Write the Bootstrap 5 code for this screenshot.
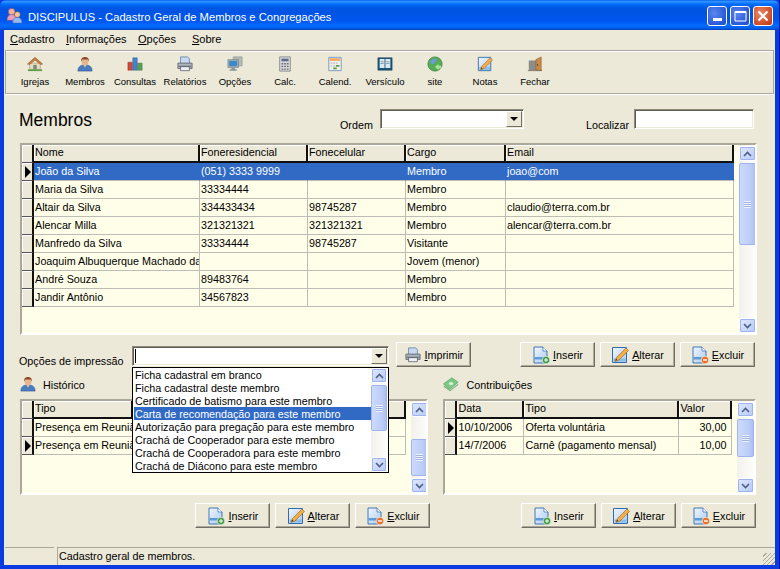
<!DOCTYPE html>
<html lang="pt">
  <head>
    <meta charset="UTF-8" />
    <title>DISCIPULUS - Cadastro Geral de Membros e Congregações</title>
    <link rel="stylesheet" type="text/css" href="https://cdn.jsdelivr.net/npm/bootstrap@5.3.3/dist/css/bootstrap.min.css" />
    <script src="https://cdn.jsdelivr.net/npm/bootstrap@5.3.3/dist/js/bootstrap.bundle.min.js"></script>
    <style>
      html, body { margin: 0; background: #0831d9; overflow: hidden; }
      body { font-family: "Liberation Sans", Arial, sans-serif; font-size: 10.75px; line-height: 13px; color: #000; }
      .xp-win { width: 780px; height: 569px; padding: 0 4px 4px; background: #0a3be0; border-right: 1px solid #0018a8; }
      .xp-title { height: 30px; margin: 0 -4px; padding: 0 6px; gap: 5px; border-radius: 6px 6px 0 0; color: #fff; font-size: 11.2px;
        background: linear-gradient(to bottom, #0058ee 0%, #3593ff 4%, #288eff 7%, #127dff 10%, #036ffc 14%, #0262ee 20%, #0057e5 26%, #0054e3 40%, #0055eb 62%, #005bf5 74%, #026afe 84%, #0062ef 92%, #0052d6 97%, #0040ab 100%); }
      .xp-title-txt { padding-top: 4px; }
      .xp-ctls { gap: 3px; padding-top: 2px; }
      .xp-ctl { width: 20px; height: 20px; border: 1px solid #fff; border-radius: 3px; background: radial-gradient(circle at 35% 35%, #5a86ee, #2453d4 80%); }
      .xp-ctl.xp-close { background: radial-gradient(circle at 35% 35%, #e88a6c, #c9411c 80%); }
      .xp-body { height: 535px; background: #ece9d8; }
      .xp-menu { height: 20px; padding-left: 6px; padding-bottom: 2px; font-size: 11px; }
      .xp-m1 { width: 56px; } .xp-m2 { width: 72px; } .xp-m3 { width: 54px; }
      .xp-tools { height: 44px; margin: 0 1px; padding-left: 4px; border: 1px solid #aca899; box-shadow: inset 0 1px 0 #fff, 0 1px 0 #fff; font-size: 9.5px; }
      .xp-tool { width: 50px; padding-top: 5px; text-align: center; }
      .xp-tool svg { display: block; margin: 0 auto 3px; }
      .xp-head { height: 49px; padding-left: 15px; }
      .xp-h { width: 321px; margin: 0; padding-top: 2px; font-size: 17.5px; line-height: 20px; font-weight: 400; }
      .xp-l-ordem { width: 40px; padding-top: 14px; }
      .xp-l-local { width: 48px; margin-left: 62px; padding-top: 13px; }
      .xp-ordem { width: 144px; height: 20px; }
      .xp-local { width: 120px; height: 20px; }
      .xp-sunk { background: #fff; border: 1px solid; border-color: #8d8a7c #fff #fff #8d8a7c; box-shadow: inset 1px 1px 0 #5f5d52, inset -1px -1px 0 #ece9d8; }
      .xp-caret { width: 1px; height: 14px; margin: 2px 0 0 2px; background: #000; }
      .xp-drop { width: 16px; height: 16px; margin: 1px; background: #ece9d8; border: 1px solid; border-color: #fff #716f64 #716f64 #fff; }
      .xp-drop i { border: 4px solid transparent; border-top: 4px solid #000; border-bottom: 0; }
      .xp-grid { border: 2px solid; border-color: #aca899 #fff #fff #aca899; background: #fffee8; overflow: hidden; }
      .xp-grid-main { width: 737px; height: 192px; margin-left: 16px; }
      .xp-table { table-layout: fixed; border-collapse: separate; border-spacing: 0; margin: 0; height: fit-content; flex: none; }
      .xp-table th, .xp-table td { height: 18px; padding: 0 1px 1px; overflow: hidden; white-space: nowrap; font-weight: 400; background: #fffee8; border-right: 1px solid #bdbdb5; border-bottom: 1px solid #bdbdb5; }
      .xp-table th { background: #ece9d8; border-right: 2px solid #111; border-bottom: 2px solid #111; box-shadow: inset 1px 1px 0 #fff; }
      .xp-table .xp-ind { padding: 0; background: #ece9d8; border-right: 2px solid #111; border-bottom: 1px solid #555; box-shadow: inset 1px 1px 0 #fff; }
      .xp-table tr.xp-sel td:not(.xp-ind) { background: #316ac5; color: #fff; border-right-color: #316ac5; }
      .xp-table .xp-num { text-align: right; padding-right: 5px; }
      .xp-arrow { display: block; margin-left: 3px; width: 0; height: 0; border: 6px solid transparent; border-left: 6px solid #000; border-right: 0; }
      .w-main { width: 712px; } .w-hist { width: 384px; } .w-contrib { width: 287px; }
      .c12 { width: 12px; } .c53 { width: 53px; } .c67 { width: 67px; } .c98 { width: 98px; } .c99 { width: 99px; } .c100 { width: 100px; } .c108 { width: 108px; } .c155 { width: 155px; } .c166 { width: 166px; } .c228 { width: 228px; } .c273 { width: 273px; }
      .xp-sb { width: 17px; margin-left: 5px; padding-top: 1px; flex: none; background: linear-gradient(to right, #f3f1ec, #fdfdfa); }
      .xp-sb-r { margin-left: auto; }
      .xp-sb-list { width: 16px; margin-left: 0; padding-top: 0; }
      .xp-sb-btn { height: 15px; flex: none; border: 1px solid #fff; border-radius: 2px; background: linear-gradient(135deg, #dfe8fe, #b7c9f6); box-shadow: 0 0 0 1px #9db4ec inset; }
      .xp-sb-thumb { flex: none; margin: 2px 0; border: 1px solid #9db4ec; border-radius: 2px; background: linear-gradient(to right, #cddafc, #bccdf9 70%, #aebff0); }
      .xp-sb-thumb i { width: 7px; height: 7px; background: repeating-linear-gradient(to bottom, #eef3ff 0 1px, #9eb3e8 1px 2px); }
      .t82 { height: 82px; } .t46 { height: 46px; } .t37 { height: 37px; } .t38 { height: 38px; }
      .xp-opts { height: 25px; margin-top: 7px; padding-left: 15px; padding-right: 20px; }
      .xp-l-opts { width: 113px; padding-top: 13px; }
      .xp-combo-wrap { width: 257px; height: 20px; margin-top: 4px; position: relative; }
      .xp-list { position: absolute; top: 21px; left: 0; width: 257px; height: 106px; padding: 0 1px; background: #fff; border: 1px solid #000; z-index: 5; }
      .xp-list-items div { height: 13px; padding-left: 1px; line-height: 13px; white-space: nowrap; }
      .xp-list-items div:first-child { margin-top: 0; }
      .xp-list-items .xp-hl { background: #316ac5; color: #fff; }
      .xp-list-items span { position: relative; top: 1px; }
      .xp-btn { width: 75px; height: 25px; padding: 0; gap: 3px; font-size: 10.75px; line-height: 13px; border-radius: 0; background: #ece9d8; color: #000; border: 1px solid; border-color: #fff #716f64 #716f64 #fff; box-shadow: inset -1px -1px 0 #aca899; }
      .xp-btn span { padding-top: 2px; }
      .xp-btn-print { margin-left: 7px; }
      .xp-btns { gap: 5px; }
      .xp-lower { margin-top: 9px; padding-left: 16px; padding-right: 19px; }
      .xp-lbl { height: 16px; gap: 7px; margin-bottom: 7px; }
      .xp-lbl span { padding-top: 2px; }
      .xp-col-l { width: 411px; }
      .xp-col-r { width: 313px; margin-left: 13px; }
      .xp-grid-sub { height: 96px; }
      .xp-grid-hist { width: 408px; }
      .xp-status { height: 18px; margin-top: auto; }
      .xp-panel { border-top: 1px solid #aca899; }
      .xp-p1 { width: 49px; margin-left: 1px; }
      .xp-p2 { margin-left: 3px; padding-left: 1px; border-left: 1px solid #aca899; }
      .xp-grip { background: repeating-linear-gradient(135deg, transparent 0 2px, #aca899 2px 3px); width: 12px; height: 12px; }
    </style>
  </head>
  <body>
    <svg width="0" height="0" class="d-block">
      <defs>
        <linearGradient id="doc-fill" x1="0" y1="0" x2="1" y2="1"><stop offset="0" stop-color="#f2f7fe"/><stop offset="1" stop-color="#a9c9ef"/></linearGradient>
        <symbol id="ic-app" viewBox="0 0 18 18">
          <circle cx="6" cy="5" r="3.500" fill="#eeb0a8" stroke="#a05040" stroke-width=".6"/>
          <path d="M1 14c0-4 2-6 5-6s5 2 5 6z" fill="#e8a0c0" stroke="#a05078" stroke-width=".6"/>
          <circle cx="12" cy="8" r="3" fill="#f0c8a0" stroke="#906030" stroke-width=".6"/>
          <path d="M7 17c0-4 2-6 5-6s5 2 5 6z" fill="#98b8f0" stroke="#4868b0" stroke-width=".6"/>
        </symbol>
        <symbol id="ic-house" viewBox="0 0 18 18">
          <path d="M3 8h12v7H3z" fill="#e9dcc0" stroke="#a08a60" stroke-width=".6"/>
          <path d="M0.500 9 9 1.500 17.500 9 15 9.500 9 4.500 3 9.500z" fill="#c8803c" stroke="#8a5426" stroke-width=".6"/>
          <path d="M7 10h4v5H7z" fill="#7c8c7c"/>
          <path d="M1 15h16v2H1z" fill="#5ea04a"/>
        </symbol>
        <symbol id="ic-person" viewBox="0 0 18 18">
          <path d="M1 17c0-5 3-7 8-7s8 2 8 7z" fill="#4a7cc0" stroke="#2c4f88" stroke-width=".6"/>
          <path d="M7 10l2 3 2-3z" fill="#e8c09a"/>
          <circle cx="9" cy="6" r="4" fill="#e8b48c"/>
          <path d="M4.500 6c0-4 2-5 4.500-5s4.500 1 4.500 5l-1.500-2H6z" fill="#8a4a24"/>
        </symbol>
        <symbol id="ic-chart" viewBox="0 0 18 18">
          <path d="M1 7h5v9H1z" fill="#d04a3c" stroke="#8c2a20" stroke-width=".5"/>
          <path d="M6.500 2h5v14h-5z" fill="#4a80d0" stroke="#28508c" stroke-width=".5"/>
          <path d="M12 8h5v8h-5z" fill="#58a058" stroke="#2e6c32" stroke-width=".5"/>
        </symbol>
        <symbol id="ic-printer" viewBox="0 0 18 18">
          <path d="M4 1h8l2 2v6H4z" fill="#c8d8f0" stroke="#5874a0" stroke-width=".8"/>
          <path d="M1 8h16v6H1z" fill="#aeb4bc" stroke="#4c5460" stroke-width=".8"/>
          <path d="M4 12h10v4.500H4z" fill="#f0f0f0" stroke="#4c5460" stroke-width=".8"/>
          <path d="M1.500 11h15v1h-15z" fill="#5c6470"/>
        </symbol>
        <symbol id="ic-computer" viewBox="0 0 18 18">
          <path d="M7 1h10v10H7z" fill="#b4bcb8" stroke="#7c8480" stroke-width=".6"/>
          <path d="M1 4h12v9H1z" fill="#a4b0b4" stroke="#687478" stroke-width=".6"/>
          <path d="M2.500 5.500h9v6h-9z" fill="#3c88c8"/>
          <path d="M5 13h4v2h2v1.500H3V15h2z" fill="#8c9498"/>
        </symbol>
        <symbol id="ic-calc" viewBox="0 0 18 18">
          <path d="M3 1h12v16H3z" fill="#d8d8d8" stroke="#70747c" stroke-width=".8"/>
          <path d="M5 3h8v3H5z" fill="#5c6c88"/>
          <path d="M5 8h2v1.500H5zm3 0h2v1.500H8zm3 0h2v1.500h-2zM5 11h2v1.500H5zm3 0h2v1.500H8zm3 0h2v1.500h-2zM5 14h2v1.500H5zm3 0h2v1.500H8zm3 0h2v1.500h-2z" fill="#6c7078"/>
        </symbol>
        <symbol id="ic-cal" viewBox="0 0 18 18">
          <path d="M2 1.500h14v15H2z" fill="#f4f0e4" stroke="#6c98c8" stroke-width="1"/>
          <path d="M3 2.500h12v3H3z" fill="#f0a868"/>
          <path d="M4 7h2v2H4zm3 0h2v2H7zm3 0h2v2h-2zM4 10h2v2H4zm3 0h2v2H7z" fill="#c4ccd8"/>
          <path d="M10 10h4v2h-4zm-3 3h4v2H7z" fill="#58a058"/>
        </symbol>
        <symbol id="ic-book" viewBox="0 0 18 18">
          <path d="M1 2h16v14H1z" fill="#1c5478" stroke="#143c58" stroke-width=".6"/>
          <path d="M3 3.500h5.500v10H3zm6.500 0H15v10H9.500z" fill="#dce8f0"/>
          <path d="M4 6h3.500v1H4zm0 2h3.500v1H4zm6.500-2H14v1h-3.500zm0 2H14v1h-3.500z" fill="#88a0b4"/>
        </symbol>
        <symbol id="ic-globe" viewBox="0 0 18 18">
          <circle cx="9" cy="9" r="8" fill="#58ac58" stroke="#2e7c34" stroke-width=".8"/>
          <path d="M4 6c2-3 5-3.500 7-3 0 2-2 2-2 4s-3 3-5 1z" fill="#6c9cd8"/>
          <path d="M9 12l4-3v2h3v3h-3v2z" fill="#b0e0a0"/>
        </symbol>
        <symbol id="ic-notes" viewBox="0 0 18 18">
          <path d="M1.500 1.500h14v15h-14z" fill="url(#doc-fill)" stroke="#2f6cb0" stroke-width="1"/>
          <path d="M2.500 12.500h12v3h-12z" fill="#8cbdea"/>
          <path d="M5.500 11.500l-1.500 4 4-1.500 9.500-9.500-2.500-2.500z" fill="#f2ae48" stroke="#9a6018" stroke-width=".6"/>
          <path d="M4.300 14.800l.8-2.200 1.400 1.400z" fill="#5a3a18"/>
        </symbol>
        <symbol id="ic-door" viewBox="0 0 18 18">
          <path d="M1 16h16v1H1z" fill="#6c6c64"/>
          <path d="M2 5h9v11H2z" fill="#8c8c88"/>
          <path d="M10 4l6-3v15h-6z" fill="#c88a48" stroke="#8c5820" stroke-width=".6"/>
          <path d="M11.500 9h1v2h-1z" fill="#5c3810"/>
        </symbol>
        <symbol id="ic-add" viewBox="0 0 18 18">
          <path d="M2 1h9l4 4v12H2z" fill="url(#doc-fill)" stroke="#2f6cb0" stroke-width=".9"/>
          <path d="M11 1v4h4" fill="#fff" stroke="#2f6cb0" stroke-width=".7"/>
          <path d="M2.500 11h12v2.500h-12z" fill="#5c9ad8"/>
          <circle cx="14" cy="14" r="3.800" fill="#3f9a44" stroke="#fff" stroke-width=".6"/>
          <path d="M12 13.500h1.500V12h1v1.500H16v1h-1.500V16h-1v-1.500H12z" fill="#fff"/>
        </symbol>
        <symbol id="ic-del" viewBox="0 0 18 18">
          <path d="M2 1h9l4 4v12H2z" fill="url(#doc-fill)" stroke="#2f6cb0" stroke-width=".9"/>
          <path d="M11 1v4h4" fill="#fff" stroke="#2f6cb0" stroke-width=".7"/>
          <path d="M2.500 11h12v2.500h-12z" fill="#5c9ad8"/>
          <circle cx="14" cy="14" r="3.800" fill="#e8702a" stroke="#fff" stroke-width=".6"/>
          <path d="M12 13.300h4v1.400h-4z" fill="#fff"/>
        </symbol>
        <symbol id="ic-money" viewBox="0 0 18 18">
          <path d="M0.500 9 10 2l7 5-9.500 8z" fill="#7cc884" stroke="#4c9c5c" stroke-width=".7"/>
          <path d="M1 11.500l7 5L17 9.500" fill="none" stroke="#6cb074" stroke-width="1.200"/>
          <ellipse cx="9" cy="8.500" rx="2.500" ry="1.800" fill="#d8f0d4"/>
        </symbol>
        <symbol id="ic-up" viewBox="0 0 9 6"><path d="M1 5l3.500-3.500L8 5" fill="none" stroke="#4d6185" stroke-width="1.600"/></symbol>
        <symbol id="ic-down" viewBox="0 0 9 6"><path d="M1 1l3.500 3.500L8 1" fill="none" stroke="#4d6185" stroke-width="1.600"/></symbol>
      </defs>
    </svg>

    <div class="xp-win d-flex flex-column">
      <div class="xp-title d-flex align-items-center flex-none">
        <svg width="17" height="17"><use href="#ic-app"/></svg>
        <span class="xp-title-txt flex-grow-1">DISCIPULUS - Cadastro Geral de Membros e Congregações</span>
        <div class="xp-ctls d-flex">
          <div class="xp-ctl d-flex align-items-end justify-content-center pb-1"><svg width="9" height="3"><rect width="9" height="3" fill="#fff"/></svg></div>
          <div class="xp-ctl d-flex align-items-center justify-content-center"><svg width="13" height="12"><path d="M1 1.500h11V11H1z" fill="none" stroke="#fff"/><path d="M1 1h11v2H1z" fill="#fff"/></svg></div>
          <div class="xp-ctl xp-close d-flex align-items-center justify-content-center"><svg width="12" height="12"><path d="M1.500 1.500l9 9m0-9l-9 9" stroke="#fff" stroke-width="2.200"/></svg></div>
        </div>
      </div>

      <div class="xp-body d-flex flex-column">
        <div class="xp-menu d-flex align-items-center">
          <span class="xp-m1"><u>C</u>adastro</span>
          <span class="xp-m2"><u>I</u>nformações</span>
          <span class="xp-m3"><u>O</u>pções</span>
          <span><u>S</u>obre</span>
        </div>

        <div class="xp-tools d-flex">
          <div class="xp-tool"><svg width="18" height="16"><use href="#ic-house"/></svg>Igrejas</div>
          <div class="xp-tool"><svg width="18" height="16"><use href="#ic-person"/></svg>Membros</div>
          <div class="xp-tool"><svg width="18" height="16"><use href="#ic-chart"/></svg>Consultas</div>
          <div class="xp-tool"><svg width="18" height="16"><use href="#ic-printer"/></svg>Relatórios</div>
          <div class="xp-tool"><svg width="18" height="16"><use href="#ic-computer"/></svg>Opções</div>
          <div class="xp-tool"><svg width="18" height="16"><use href="#ic-calc"/></svg>Calc.</div>
          <div class="xp-tool"><svg width="18" height="16"><use href="#ic-cal"/></svg>Calend.</div>
          <div class="xp-tool"><svg width="18" height="16"><use href="#ic-book"/></svg>Versículo</div>
          <div class="xp-tool"><svg width="18" height="16"><use href="#ic-globe"/></svg>site</div>
          <div class="xp-tool"><svg width="18" height="16"><use href="#ic-notes"/></svg>Notas</div>
          <div class="xp-tool"><svg width="18" height="16"><use href="#ic-door"/></svg>Fechar</div>
        </div>

        <div class="xp-head d-flex align-items-center">
          <h1 class="xp-h">Membros</h1>
          <span class="xp-l-ordem">Ordem</span>
          <div class="xp-sunk xp-ordem d-flex justify-content-end">
            <div class="xp-drop d-flex align-items-center justify-content-center"><i></i></div>
          </div>
          <span class="xp-l-local">Localizar</span>
          <div class="xp-sunk xp-local"></div>
        </div>

        <div class="xp-grid xp-grid-main d-flex">
          <table class="xp-table w-main">
            <colgroup><col class="c12"/><col class="c166"/><col class="c108"/><col class="c98"/><col class="c100"/><col class="c228"/></colgroup>
            <thead><tr><th class="xp-ind"></th><th>Nome</th><th>Foneresidencial</th><th>Fonecelular</th><th>Cargo</th><th>Email</th></tr></thead>
            <tbody>
              <tr class="xp-sel"><td class="xp-ind"><span class="xp-arrow"></span></td><td>João da Silva</td><td>(051) 3333 9999</td><td></td><td>Membro</td><td>joao@com</td></tr>
              <tr><td class="xp-ind"></td><td>Maria da Silva</td><td>33334444</td><td></td><td>Membro</td><td></td></tr>
              <tr><td class="xp-ind"></td><td>Altair da Silva</td><td>334433434</td><td>98745287</td><td>Membro</td><td>claudio@terra.com.br</td></tr>
              <tr><td class="xp-ind"></td><td>Alencar Milla</td><td>321321321</td><td>321321321</td><td>Membro</td><td>alencar@terra.com.br</td></tr>
              <tr><td class="xp-ind"></td><td>Manfredo da Silva</td><td>33334444</td><td>98745287</td><td>Visitante</td><td></td></tr>
              <tr><td class="xp-ind"></td><td>Joaquim Albuquerque Machado da</td><td></td><td></td><td>Jovem (menor)</td><td></td></tr>
              <tr><td class="xp-ind"></td><td>André Souza</td><td>89483764</td><td></td><td>Membro</td><td></td></tr>
              <tr><td class="xp-ind"></td><td>Jandir Antônio</td><td>34567823</td><td></td><td>Membro</td><td></td></tr>
            </tbody>
          </table>
          <div class="xp-sb d-flex flex-column">
            <div class="xp-sb-btn d-flex align-items-center justify-content-center"><svg width="9" height="6"><use href="#ic-up"/></svg></div>
            <div class="xp-sb-thumb t82 d-flex align-items-center justify-content-center"><i></i></div>
            <div class="flex-grow-1"></div>
            <div class="xp-sb-btn d-flex align-items-center justify-content-center"><svg width="9" height="6"><use href="#ic-down"/></svg></div>
          </div>
        </div>

        <div class="xp-opts d-flex">
          <span class="xp-l-opts">Opções de impressão</span>
          <div class="xp-combo-wrap">
            <div class="xp-sunk d-flex justify-content-between h-100">
              <span class="xp-caret"></span>
              <div class="xp-drop d-flex align-items-center justify-content-center"><i></i></div>
            </div>
            <div class="xp-list d-flex">
              <div class="xp-list-items flex-grow-1">
                <div><span>Ficha cadastral em branco</span></div>
                <div><span>Ficha cadastral deste membro</span></div>
                <div><span>Certificado de batismo para este membro</span></div>
                <div class="xp-hl"><span>Carta de recomendação para este membro</span></div>
                <div><span>Autorização para pregação para este membro</span></div>
                <div><span>Crachá de Cooperador para este membro</span></div>
                <div><span>Crachá de Cooperadora para este membro</span></div>
                <div><span>Crachá de Diácono para este membro</span></div>
              </div>
              <div class="xp-sb xp-sb-list d-flex flex-column">
                <div class="xp-sb-btn d-flex align-items-center justify-content-center"><svg width="9" height="6"><use href="#ic-up"/></svg></div>
                <div class="xp-sb-thumb t46 d-flex align-items-center justify-content-center"><i></i></div>
                <div class="flex-grow-1"></div>
                <div class="xp-sb-btn d-flex align-items-center justify-content-center"><svg width="9" height="6"><use href="#ic-down"/></svg></div>
              </div>
            </div>
          </div>
          <button type="button" class="btn xp-btn xp-btn-print d-flex align-items-center justify-content-center"><svg width="18" height="16"><use href="#ic-printer"/></svg><span><u>I</u>mprimir</span></button>
          <div class="xp-btns ms-auto d-flex">
            <button type="button" class="btn xp-btn d-flex align-items-center justify-content-center"><svg width="18" height="18"><use href="#ic-add"/></svg><span><u>I</u>nserir</span></button>
            <button type="button" class="btn xp-btn d-flex align-items-center justify-content-center"><svg width="18" height="18"><use href="#ic-notes"/></svg><span><u>A</u>lterar</span></button>
            <button type="button" class="btn xp-btn d-flex align-items-center justify-content-center"><svg width="18" height="18"><use href="#ic-del"/></svg><span><u>E</u>xcluir</span></button>
          </div>
        </div>

        <div class="xp-lower d-flex">
          <div class="xp-col-l">
            <div class="xp-lbl d-flex align-items-center"><svg width="16" height="16"><use href="#ic-person"/></svg><span>Histórico</span></div>
            <div class="xp-grid xp-grid-sub xp-grid-hist d-flex">
              <table class="xp-table w-hist">
                <colgroup><col class="c12"/><col class="c99"/><col class="c273"/></colgroup>
                <thead><tr><th class="xp-ind"></th><th>Tipo</th><th></th></tr></thead>
                <tbody>
                  <tr><td class="xp-ind"></td><td>Presença em Reunião</td><td></td></tr>
                  <tr><td class="xp-ind"><span class="xp-arrow"></span></td><td>Presença em Reunião</td><td></td></tr>
                </tbody>
              </table>
              <div class="xp-sb d-flex flex-column">
                <div class="xp-sb-btn d-flex align-items-center justify-content-center"><svg width="9" height="6"><use href="#ic-up"/></svg></div>
                <div class="flex-grow-1"></div>
                <div class="xp-sb-thumb t37 d-flex align-items-center justify-content-center"><i></i></div>
                <div class="xp-sb-btn d-flex align-items-center justify-content-center"><svg width="9" height="6"><use href="#ic-down"/></svg></div>
              </div>
            </div>
            <div class="xp-btns d-flex justify-content-end mt-2">
              <button type="button" class="btn xp-btn d-flex align-items-center justify-content-center"><svg width="18" height="18"><use href="#ic-add"/></svg><span><u>I</u>nserir</span></button>
              <button type="button" class="btn xp-btn d-flex align-items-center justify-content-center"><svg width="18" height="18"><use href="#ic-notes"/></svg><span><u>A</u>lterar</span></button>
              <button type="button" class="btn xp-btn d-flex align-items-center justify-content-center"><svg width="18" height="18"><use href="#ic-del"/></svg><span><u>E</u>xcluir</span></button>
            </div>
          </div>

          <div class="xp-col-r">
            <div class="xp-lbl d-flex align-items-center"><svg width="16" height="16"><use href="#ic-money"/></svg><span>Contribuições</span></div>
            <div class="xp-grid xp-grid-sub d-flex">
              <table class="xp-table w-contrib">
                <colgroup><col class="c12"/><col class="c67"/><col class="c155"/><col class="c53"/></colgroup>
                <thead><tr><th class="xp-ind"></th><th>Data</th><th>Tipo</th><th>Valor</th></tr></thead>
                <tbody>
                  <tr><td class="xp-ind"><span class="xp-arrow"></span></td><td>10/10/2006</td><td>Oferta voluntária</td><td class="xp-num">30,00</td></tr>
                  <tr><td class="xp-ind"></td><td>14/7/2006</td><td>Carnê (pagamento mensal)</td><td class="xp-num">10,00</td></tr>
                </tbody>
              </table>
              <div class="xp-sb xp-sb-r d-flex flex-column">
                <div class="xp-sb-btn d-flex align-items-center justify-content-center"><svg width="9" height="6"><use href="#ic-up"/></svg></div>
                <div class="xp-sb-thumb t38 d-flex align-items-center justify-content-center"><i></i></div>
                <div class="flex-grow-1"></div>
                <div class="xp-sb-btn d-flex align-items-center justify-content-center"><svg width="9" height="6"><use href="#ic-down"/></svg></div>
              </div>
            </div>
            <div class="xp-btns d-flex justify-content-end mt-2">
              <button type="button" class="btn xp-btn d-flex align-items-center justify-content-center"><svg width="18" height="18"><use href="#ic-add"/></svg><span><u>I</u>nserir</span></button>
              <button type="button" class="btn xp-btn d-flex align-items-center justify-content-center"><svg width="18" height="18"><use href="#ic-notes"/></svg><span><u>A</u>lterar</span></button>
              <button type="button" class="btn xp-btn d-flex align-items-center justify-content-center"><svg width="18" height="18"><use href="#ic-del"/></svg><span><u>E</u>xcluir</span></button>
            </div>
          </div>
        </div>

        <div class="xp-status d-flex">
          <div class="xp-panel xp-p1"></div>
          <div class="xp-panel xp-p2 flex-grow-1 d-flex align-items-center justify-content-between">
            <span>Cadastro geral de membros.</span>
            <div class="xp-grip align-self-end"></div>
          </div>
        </div>
      </div>
    </div>
  </body>
</html>
